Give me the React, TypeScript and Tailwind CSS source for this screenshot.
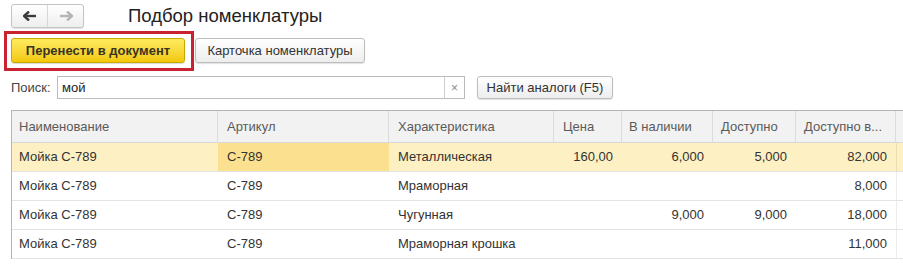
import React from 'react';

type Row = {
  name: string;
  sku: string;
  kind: string;
  price: string;
  stock: string;
  avail: string;
  availWh: string;
  selected?: boolean;
};

const rows: Row[] = [
  { name: 'Мойка С-789', sku: 'С-789', kind: 'Металлическая', price: '160,00', stock: '6,000', avail: '5,000', availWh: '82,000', selected: true },
  { name: 'Мойка С-789', sku: 'С-789', kind: 'Мраморная', price: '', stock: '', avail: '', availWh: '8,000' },
  { name: 'Мойка С-789', sku: 'С-789', kind: 'Чугунная', price: '', stock: '9,000', avail: '9,000', availWh: '18,000' },
  { name: 'Мойка С-789', sku: 'С-789', kind: 'Мраморная крошка', price: '', stock: '', avail: '', availWh: '11,000' },
];

const ArrowLeft = ({ color }: { color: string }) => (
  <svg width="14" height="10" viewBox="0 0 14 10">
    <path d="M1 5h12" stroke={color} strokeWidth="2.4" />
    <path d="M6 0.5L1 5l5 4.5" fill="none" stroke={color} strokeWidth="2.4" />
  </svg>
);

const ArrowRight = ({ color }: { color: string }) => (
  <svg width="14" height="10" viewBox="0 0 14 10">
    <path d="M1 5h12" stroke={color} strokeWidth="2.4" />
    <path d="M8 0.5L13 5l-5 4.5" fill="none" stroke={color} strokeWidth="2.4" />
  </svg>
);

const App = () => {
  return (
    <div
      className="w-[903px] h-[267px] overflow-hidden bg-white text-[13px] text-[#333]"
      style={{ fontFamily: '"Liberation Sans", Arial, sans-serif' }}
    >
      {/* header */}
      <div className="flex items-center h-[24px] mt-[4px] pl-[11px]">
        <div className="flex h-[24px] w-[73px] border border-[#c4c4c4] rounded-[3px] bg-gradient-to-b from-white to-[#eeeeee] shadow-[0_1px_1px_rgba(0,0,0,0.12)]">
          <div className="flex-1 flex items-center justify-center border-r border-[#d6d6d6]">
            <ArrowLeft color="#3c3c3c" />
          </div>
          <div className="flex-1 flex items-center justify-center">
            <ArrowRight color="#b5b5b5" />
          </div>
        </div>
        <div className="ml-[44px] text-[18.5px] text-[#222] leading-none">Подбор номенклатуры</div>
      </div>

      {/* command bar */}
      <div className="flex items-start mt-[3px]">
        <div className="ml-[4px] w-[190px] h-[40px] border-[3px] border-[#c8232f] pl-[4px] pt-[4px]">
          <button className="w-[174px] h-[25px] rounded-[3px] border border-[#c9a800] bg-gradient-to-b from-[#ffec5c] to-[#f2c800] font-bold text-[13px] text-[#3a3320] shadow-[0_1px_1px_rgba(0,0,0,0.15)]">
            Перенести в документ
          </button>
        </div>
        <button className="ml-[1px] mt-[7px] w-[170px] h-[25px] rounded-[3px] border border-[#bdbdbd] bg-gradient-to-b from-white to-[#ededed] text-[13px] text-[#333] shadow-[0_1px_1px_rgba(0,0,0,0.12)]">
          Карточка номенклатуры
        </button>
      </div>

      {/* search */}
      <div className="flex items-center mt-[5px] pl-[11px] h-[23px]">
        <span className="w-[46px] text-[#444]">Поиск:</span>
        <div className="flex h-[23px] w-[408px] border border-[#bcbcbc] bg-white">
          <div className="flex-1 pl-[4px] flex items-center text-[#222]">мой</div>
          <div className="w-[20px] flex items-center justify-center border-l border-[#cfcfcf] text-[#888] text-[12px]">×</div>
        </div>
        <button className="ml-[12px] w-[136px] h-[23px] rounded-[3px] border border-[#bdbdbd] bg-gradient-to-b from-white to-[#ededed] text-[13px] text-[#333] shadow-[0_1px_1px_rgba(0,0,0,0.12)]">
          Найти аналоги (F5)
        </button>
      </div>

      {/* table */}
      <div className="ml-[11px] mt-[11px] w-[892px] border-t border-l border-[#b5b5b5]">
        <div className="grid grid-cols-[206px_171px_165px_68px_91px_83px_100px_8px] h-[32px] bg-[#f2f2f2] border-b border-[#d8d8d8] text-[#5a5a5a]">
          <div className="flex items-center pl-[7px] border-r border-[#dcdcdc]">Наименование</div>
          <div className="flex items-center pl-[9px] border-r border-[#dcdcdc]">Артикул</div>
          <div className="flex items-center pl-[9px] border-r border-[#dcdcdc]">Характеристика</div>
          <div className="flex items-center pl-[9px] border-r border-[#dcdcdc]">Цена</div>
          <div className="flex items-center pl-[7px] border-r border-[#dcdcdc]">В наличии</div>
          <div className="flex items-center pl-[8px] border-r border-[#dcdcdc]">Доступно</div>
          <div className="flex items-center pl-[8px] border-r border-[#dcdcdc]">Доступно в...</div>
          <div />
        </div>
        {rows.map((r, i) => (
          <div
            key={i}
            className={
              r.selected
                ? 'grid grid-cols-[206px_171px_165px_68px_91px_83px_100px_8px] h-[29px] border-b border-[#e3e3e3] bg-[#fdf0c3]'
                : 'grid grid-cols-[206px_171px_165px_68px_91px_83px_100px_8px] h-[29px] border-b border-[#e3e3e3] bg-white'
            }
          >
            <div className="flex items-center pl-[7px]">{r.name}</div>
            <div className={r.selected ? 'flex items-center pl-[9px] bg-[#fbe08f]' : 'flex items-center pl-[9px]'}>{r.sku}</div>
            <div className="flex items-center pl-[9px]">{r.kind}</div>
            <div className="flex items-center justify-end pr-[9px]">{r.price}</div>
            <div className="flex items-center justify-end pr-[9px]">{r.stock}</div>
            <div className="flex items-center justify-end pr-[9px]">{r.avail}</div>
            <div className="flex items-center justify-end pr-[9px]">{r.availWh}</div>
            <div className={r.selected ? 'border-l border-[#eadfb0]' : 'border-l border-[#ececec]'} />
          </div>
        ))}
      </div>
    </div>
  );
};

export default App;
